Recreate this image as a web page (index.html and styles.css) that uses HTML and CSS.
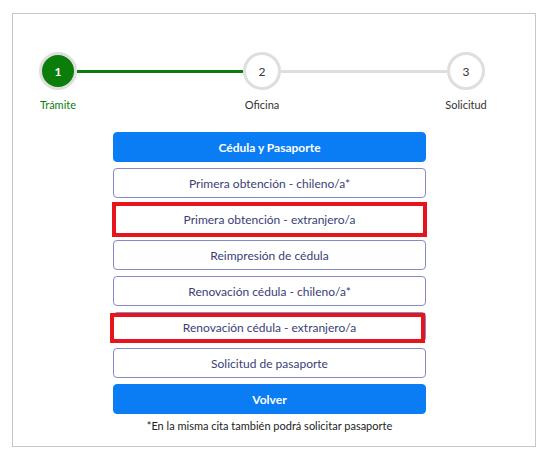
FILE: index.html
```html
<!DOCTYPE html>
<html lang="es">
<head>
<meta charset="utf-8">
<title>Trámite</title>
<link rel="stylesheet" href="styles.css">
</head>
<body>
<div class="frame">
  <div class="stepper">
    <div class="step step-done">
      <div class="circle">1</div>
      <div class="label">Trámite</div>
    </div>
    <div class="line line-done"></div>
    <div class="step">
      <div class="circle">2</div>
      <div class="label">Oficina</div>
    </div>
    <div class="line"></div>
    <div class="step">
      <div class="circle">3</div>
      <div class="label">Solicitud</div>
    </div>
  </div>
  <div class="options">
    <button class="btn btn-primary">Cédula y Pasaporte</button>
    <button class="btn">Primera obtención - chileno/a*</button>
    <button class="btn marked marked-a">Primera obtención - extranjero/a</button>
    <button class="btn">Reimpresión de cédula</button>
    <button class="btn">Renovación cédula - chileno/a*</button>
    <button class="btn marked marked-b">Renovación cédula - extranjero/a</button>
    <button class="btn">Solicitud de pasaporte</button>
    <button class="btn btn-primary">Volver</button>
    <p class="note">*En la misma cita también podrá solicitar pasaporte</p>
  </div>
</div>
</body>
</html>
```
FILE: styles.css
```css
* { box-sizing: border-box; }
html, body { margin: 0; padding: 0; background: #fff; }
body {
  font-family: "Lato", "Open Sans", sans-serif;
  padding: 13px 12px 0 12px;
}
.frame {
  width: 524px;
  height: 434px;
  border: 1px solid #c6c6c6;
  padding-top: 38px;
}
.stepper {
  display: flex;
  align-items: flex-start;
  padding: 0 50px 0 26px;
}
.step {
  width: 38px;
  display: flex;
  flex-direction: column;
  align-items: center;
}
.circle {
  width: 38px;
  height: 38px;
  border-radius: 50%;
  border: 3px solid #dedede;
  background: #fff;
  color: #333;
  font-size: 12px;
  display: flex;
  align-items: center;
  justify-content: center;
}
.step-done .circle {
  background: #0b7d0b;
  color: #fff;
  font-weight: 700;
}
.label {
  margin-top: 8px;
  font-size: 11px;
  line-height: 14px;
  color: #333;
  white-space: nowrap;
}
.step-done .label { color: #0b7d0b; }
.line {
  flex: 1;
  height: 3px;
  margin-top: 17.5px;
  background: #dedede;
}
.line-done { background: #0b7d0b; }
.options {
  width: 313px;
  margin: 20px 0 0 100px;
  display: flex;
  flex-direction: column;
  gap: 6px;
}
.btn {
  position: relative;
  height: 30px;
  border: 1px solid #858bc4;
  border-radius: 4px;
  background: #fff;
  color: #3b3d78;
  font-family: inherit;
  font-size: 12px;
  padding: 0;
}
.btn-primary {
  background: #0a7df5;
  border-color: #0a7df5;
  color: #fff;
  font-weight: 700;
}
.marked::after {
  content: "";
  position: absolute;
  border: 4px solid #e8141c;
}
.marked-a::after { top: -3px; bottom: -4px; left: -2px; right: -2px; }
.marked-b::after { top: 0; bottom: -2px; left: -4px; right: 0; }
.note {
  margin: -1px 0 0;
  text-align: center;
  font-size: 11px;
  line-height: 14px;
  color: #222;
}
```
